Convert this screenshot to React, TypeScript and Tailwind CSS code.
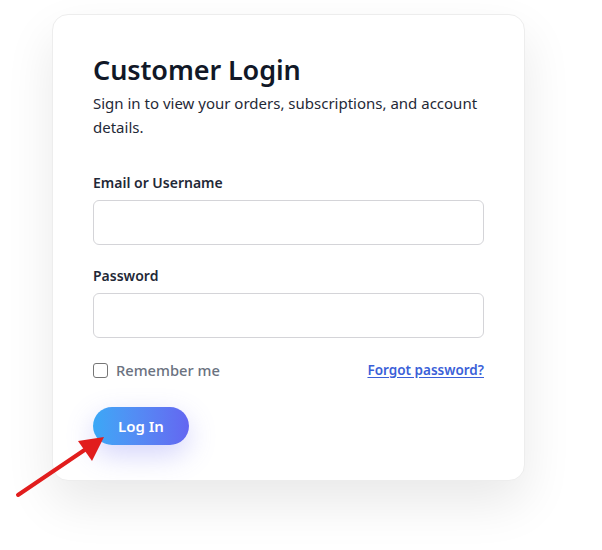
import React from "react";

export default function App() {
  return (
    <div
      className="relative w-[602px] h-[550px] bg-white overflow-hidden"
      style={{ fontFamily: '"Noto Sans", "Open Sans", sans-serif' }}
    >
      <div className="pt-[14px] pl-[52px]">
        <div className="w-[473px] rounded-[16px] border border-[#ededed] bg-white px-[40px] pt-[36px] pb-[35px] shadow-[0_22px_50px_rgba(0,0,0,0.09)]">
          <h1 className="text-[27px] leading-[38px] font-semibold text-[#111827] tracking-[-0.1px]">
            Customer Login
          </h1>
          <p className="mt-[2px] text-[15px] leading-[24px] text-[#1f2937]">
            Sign in to view your orders, subscriptions, and account details.
          </p>

          <div className="mt-[34px] flex flex-col">
            <label className="text-[14px] leading-[20px] font-semibold text-[#1f2937]">
              Email or Username
            </label>
            <div className="mt-[7px] h-[45px] w-full rounded-[6px] border border-[#d4d4d8] bg-white" />
          </div>

          <div className="mt-[21px] flex flex-col">
            <label className="text-[14px] leading-[20px] font-semibold text-[#1f2937]">
              Password
            </label>
            <div className="mt-[7px] h-[45px] w-full rounded-[6px] border border-[#d4d4d8] bg-white" />
          </div>

          <div className="mt-[21px] flex items-center justify-between">
            <div className="flex items-center gap-[8px]">
              <div className="h-[15px] w-[15px] rounded-[3px] border border-[#767676] bg-white" />
              <span className="text-[14.7px] font-medium text-[#6b7280]">Remember me</span>
            </div>
            <a className="text-[13.5px] font-semibold text-[#3b5fd8] underline underline-offset-2">
              Forgot password?
            </a>
          </div>

          <button className="mt-[26px] h-[38px] w-[96px] rounded-full bg-gradient-to-r from-[#3aa8f6] to-[#6366f1] text-[15px] font-semibold text-white shadow-[0_10px_28px_rgba(99,102,241,0.28)]">
            Log In
          </button>
        </div>
      </div>

      <svg className="absolute left-0 top-0" width="602" height="550" viewBox="0 0 602 550">
        <line x1="18" y1="495" x2="86" y2="449" stroke="#e11d1d" strokeWidth="4" strokeLinecap="round" />
        <polygon points="104,437 78,441 92,461" fill="#e11d1d" />
      </svg>
    </div>
  );
}
